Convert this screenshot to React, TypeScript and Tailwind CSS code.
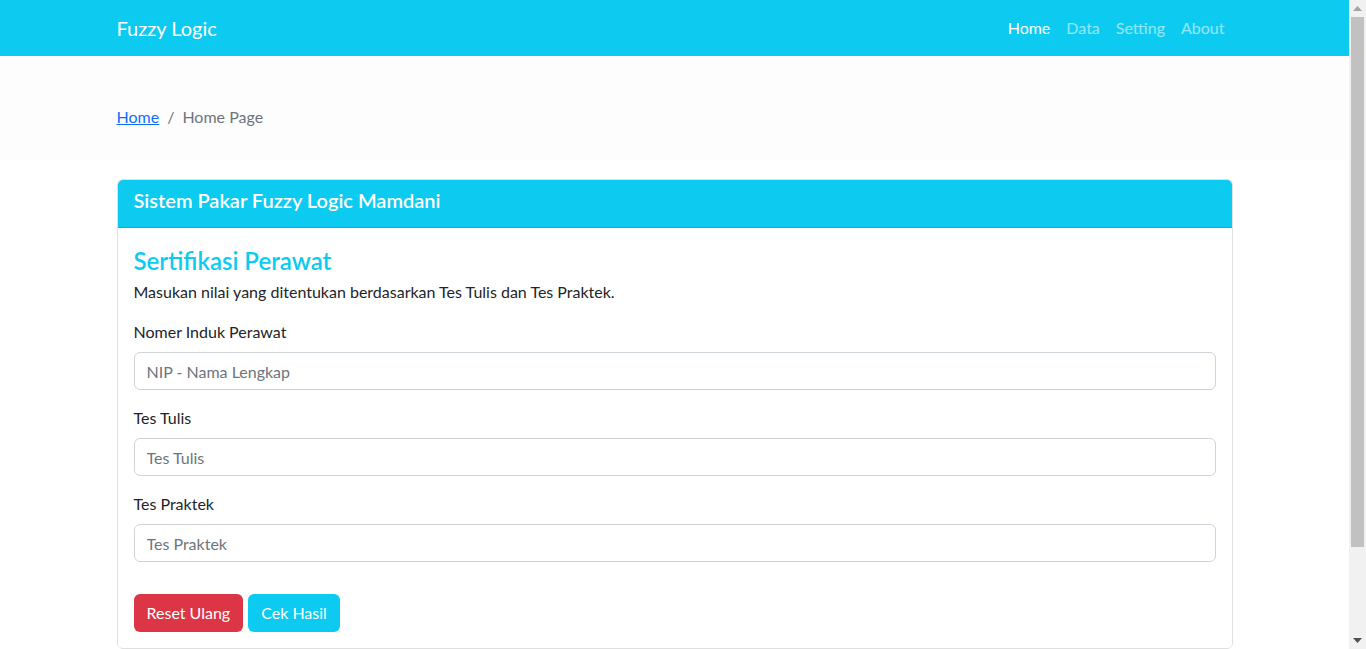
import React from "react";

function FakeScrollbar() {
  return (
    <div className="w-[17px] h-full bg-[#f1f1f1] flex flex-col items-center shrink-0">
      <div className="h-[17px] w-full flex items-center justify-center">
        <svg width="9" height="5" viewBox="0 0 9 5"><path d="M0 5 L4.5 0 L9 5 Z" fill="#a3a3a3" /></svg>
      </div>
      <div className="w-[13px] h-[530px] bg-[#c1c1c1]" />
      <div className="flex-1" />
      <div className="h-[17px] w-full flex items-center justify-center">
        <svg width="9" height="5" viewBox="0 0 9 5"><path d="M0 0 L9 0 L4.5 5 Z" fill="#505050" /></svg>
      </div>
    </div>
  );
}

function Field({ label, placeholder }: { label: string; placeholder: string }) {
  return (
    <div className="mb-4">
      <label className="block mb-2">{label}</label>
      <input
        className="block w-full h-[38px] px-3 border border-[#ced4da] rounded-md placeholder:text-[#6c757d] outline-none bg-white"
        placeholder={placeholder}
      />
    </div>
  );
}

export default function App() {
  const font = { fontFamily: '"Lato", "Noto Sans", sans-serif' };
  return (
    <div className="h-[649px] flex overflow-hidden bg-white text-[#212529] text-base leading-6" style={font}>
      <div className="flex-1 min-w-0 overflow-hidden">
        <nav className="bg-[#0dcaf0] h-14">
          <div className="max-w-[1140px] mx-auto px-3 h-full flex items-center justify-between">
            <a className="text-white text-xl leading-[30px]">Fuzzy Logic</a>
            <ul className="flex items-center">
              <li><a className="block px-2 py-2 text-white">Home</a></li>
              <li><a className="block px-2 py-2 text-white/55">Data</a></li>
              <li><a className="block px-2 py-2 text-white/55">Setting</a></li>
              <li><a className="block px-2 py-2 text-white/55">About</a></li>
            </ul>
          </div>
        </nav>
        <section className="bg-[#fdfdfd] pt-[49px] pb-[31px]">
          <div className="max-w-[1140px] mx-auto px-3">
            <ol className="flex items-center">
              <li><a className="text-[#0d6efd] underline">Home</a></li>
              <li className="flex text-[#6c757d]">
                <span className="px-2">/</span>
                <span>Home Page</span>
              </li>
            </ol>
          </div>
        </section>
        <div className="max-w-[1140px] mx-auto px-3 pt-[19px] pb-10">
          <div className="border border-black/[0.125] rounded-md overflow-hidden">
            <div className="bg-[#0dcaf0] px-4 pt-2 pb-[7px] border-b border-black/[0.125]">
              <h5 className="text-white text-xl leading-6 font-semibold mb-2">Sistem Pakar Fuzzy Logic Mamdani</h5>
            </div>
            <div className="px-4 pt-[18px] pb-4 bg-white">
              <h4 className="text-[#0dcaf0] text-2xl leading-[29px] font-semibold mb-[5px]">Sertifikasi Perawat</h4>
              <p className="mb-4">Masukan nilai yang ditentukan berdasarkan Tes Tulis dan Tes Praktek.</p>
              <Field label="Nomer Induk Perawat" placeholder="NIP - Nama Lengkap" />
              <Field label="Tes Tulis" placeholder="Tes Tulis" />
              <Field label="Tes Praktek" placeholder="Tes Praktek" />
              <div className="pt-4 flex gap-[5px]">
                <button className="h-[38px] px-[13px] bg-[#dc3545] text-white rounded-md">Reset Ulang</button>
                <button className="h-[38px] px-[13px] bg-[#0dcaf0] text-white rounded-md">Cek Hasil</button>
              </div>
            </div>
          </div>
        </div>
      </div>
      <FakeScrollbar />
    </div>
  );
}
